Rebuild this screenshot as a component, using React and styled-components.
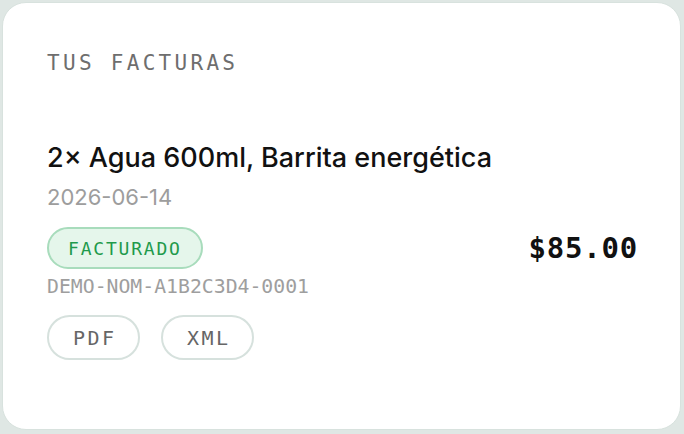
import React from "react";
import styled, { createGlobalStyle } from "styled-components";

const Global = createGlobalStyle`
  html, body {
    margin: 0;
    padding: 0;
    background: #dfe7e4;
  }
  body {
    font-family: "Inter", "Noto Sans", sans-serif;
  }
`;

const mono = `"DejaVu Sans Mono", "Liberation Mono", monospace`;

const Page = styled.div`
  width: 684px;
  height: 434px;
  padding: 2px 3px 4px 2px;
  box-sizing: border-box;
`;

const Card = styled.section`
  height: 100%;
  box-sizing: border-box;
  background: #fff;
  border: 1px solid #d8e2de;
  border-radius: 24px;
  padding: 48px 42px 0 44px;
`;

const Heading = styled.h2`
  margin: 0;
  font-family: ${mono};
  font-size: 21px;
  font-weight: 400;
  letter-spacing: 3.3px;
  color: #6e6e6e;
  line-height: 24px;
`;

const Row = styled.div`
  display: flex;
  align-items: center;
  justify-content: space-between;
  margin-top: 67px;
`;

const Info = styled.div`
  display: flex;
  flex-direction: column;
  align-items: flex-start;
`;

const Name = styled.div`
  font-size: 27px;
  font-weight: 500;
  color: #111;
  line-height: 32px;
`;

const DateText = styled.div`
  margin-top: 9px;
  font-size: 22px;
  color: #9d9d9d;
  line-height: 28px;
`;

const Badge = styled.span`
  margin-top: 16px;
  display: inline-flex;
  align-items: center;
  box-sizing: border-box;
  height: 42px;
  padding: 0 19px;
  border-radius: 21px;
  background: #e5f6eb;
  border: 2px solid #a8dcbc;
  font-family: ${mono};
  font-size: 18px;
  letter-spacing: 1.8px;
  color: #1f9a4c;
`;

const Code = styled.div`
  margin-top: 5px;
  font-family: ${mono};
  font-size: 19.8px;
  color: #9e9e9e;
  line-height: 26px;
`;

const Actions = styled.div`
  display: flex;
  gap: 21px;
  margin-top: 15px;
`;

const Action = styled.button`
  box-sizing: border-box;
  height: 45px;
  width: 93px;
  padding: 0;
  border-radius: 23px;
  background: #fff;
  border: 2px solid #d6e1dd;
  font-family: ${mono};
  font-size: 20px;
  letter-spacing: 2.5px;
  text-indent: 2.5px;
  color: #666;
  cursor: pointer;
`;

const Price = styled.div`
  font-family: ${mono};
  font-size: 29px;
  font-weight: 700;
  letter-spacing: 0.8px;
  color: #111;
  margin-bottom: 6px;
`;

export default function App() {
  return (
    <Page>
      <Global />
      <Card>
        <Heading>TUS FACTURAS</Heading>
        <Row>
          <Info>
            <Name>2× Agua 600ml, Barrita energética</Name>
            <DateText>2026-06-14</DateText>
            <Badge>FACTURADO</Badge>
            <Code>DEMO-NOM-A1B2C3D4-0001</Code>
            <Actions>
              <Action>PDF</Action>
              <Action>XML</Action>
            </Actions>
          </Info>
          <Price>$85.00</Price>
        </Row>
      </Card>
    </Page>
  );
}
